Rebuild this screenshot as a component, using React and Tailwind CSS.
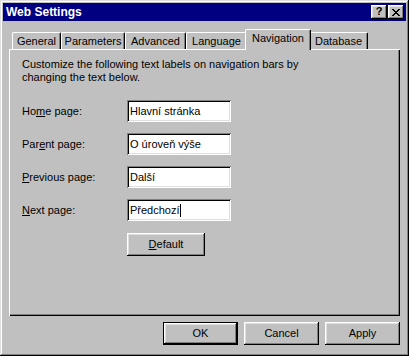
import React from "react";

const raised =
  "shadow-[inset_-1px_-1px_#000,inset_1px_1px_#fff,inset_-2px_-2px_#808080,inset_2px_2px_#dfdfdf]";
const sunken =
  "shadow-[inset_1px_1px_#808080,inset_-1px_-1px_#fff,inset_2px_2px_#000,inset_-2px_-2px_#dfdfdf]";

function Tab({ label, selected, w }) {
  if (selected) {
    return (
      <div className={`relative z-10 -mx-[2px] mb-[-1px] h-[21px] ${w} bg-[#c0c0c0] border-l border-t border-white border-r border-r-[#000] rounded-t-[2px] flex justify-center items-start shadow-[inset_-1px_0_#808080]`}>
        <span className="text-[11px] leading-[14px] pt-[1px]">{label}</span>
      </div>
    );
  }
  return (
    <div className={`h-[17px] ${w} bg-[#c0c0c0] border-l border-t border-white border-r border-r-[#000] rounded-t-[2px] flex justify-center items-start shadow-[inset_-1px_0_#808080]`}>
      <span className="text-[11px] leading-[14px] pt-[1px]">{label}</span>
    </div>
  );
}

function Field({ label, value, u, caret }) {
  const idx = label.indexOf(u);
  return (
    <div className="flex items-center h-[22px]">
      <div className="w-[105px] text-[11px]">
        {label.slice(0, idx)}
        <span className="underline underline-offset-[1px]">{u}</span>
        {label.slice(idx + 1)}
      </div>
      <div className={`w-[104px] h-[22px] bg-white ${sunken} pl-[3px] flex items-center text-[11px]`}>
        <span>{value}</span>
        {caret && <span className="inline-block w-[1px] h-[13px] bg-black" />}
      </div>
    </div>
  );
}

function Btn({ children, def, w = "w-[75px]" }) {
  if (def) {
    return (
      <div className={`${w} h-[23px] border border-black`}>
        <div className={`w-full h-full bg-[#c0c0c0] ${raised} flex items-center justify-center text-[11px]`}>
          {children}
        </div>
      </div>
    );
  }
  return (
    <div className={`${w} h-[23px] bg-[#c0c0c0] ${raised} flex items-center justify-center text-[11px]`}>
      {children}
    </div>
  );
}

export default function App() {
  return (
    <div
      className="w-[409px] h-[356px] bg-[#c0c0c0] p-[3px] text-black shadow-[inset_-1px_-1px_#000,inset_1px_1px_#dfdfdf,inset_-2px_-2px_#808080,inset_2px_2px_#fff]"
      style={{ fontFamily: '"Liberation Sans", Arial, sans-serif' }}
    >
      {/* title bar */}
      <div className="h-[18px] bg-[#000080] flex items-center pl-[3px] pr-[2px]">
        <span className="text-white font-bold text-[12px] leading-none flex-1">Web Settings</span>
        <div className={`w-[16px] h-[14px] bg-[#c0c0c0] ${raised} flex items-center justify-center text-[11px] font-bold leading-none pb-[1px]`}>?</div>
        <div className={`ml-[1px] w-[16px] h-[14px] bg-[#c0c0c0] ${raised} flex items-center justify-center`}>
          <svg width="8" height="7" viewBox="0 0 8 7" shapeRendering="crispEdges">
            <path d="M0 0h2v1h-2zM6 0h2v1h-2zM1 1h2v1h-2zM5 1h2v1h-2zM2 2h4v1h-4zM3 3h2v1h-2zM2 4h4v1h-4zM1 5h2v1h-2zM5 5h2v1h-2zM0 6h2v1h-2zM6 6h2v1h-2z" fill="#000" />
          </svg>
        </div>
      </div>

      {/* body */}
      <div className="px-[6px] pt-[7px]">
        <div className="flex items-end pl-[3px] h-[21px]">
          <Tab label="General" w="w-[49px]" />
          <Tab label="Parameters" w="w-[64px]" />
          <Tab label="Advanced" w="w-[61px]" />
          <Tab label="Language" w="w-[61px]" />
          <Tab label="Navigation" w="w-[66px]" selected />
          <Tab label="Database" w="w-[59px]" />
        </div>
        <div className="h-[267px] bg-[#c0c0c0] border-l border-t border-white shadow-[inset_-1px_-1px_#000,inset_-2px_-2px_#808080] pl-[12px] pt-[8px]">
          <p className="text-[11px] leading-[13px] w-[285px]">
            Customize the following text labels on navigation bars by changing the text below.
          </p>
          <div className="mt-[16px] flex flex-col gap-[11px]">
            <Field label="Home page:" u="m" value="Hlavní stránka" />
            <Field label="Parent page:" u="e" value="O úroveň výše" />
            <Field label="Previous page:" u="P" value="Další" />
            <Field label="Next page:" u="N" value="Předchozí" caret />
          </div>
          <div className="mt-[12px] ml-[105px]">
            <Btn w="w-[78px]">
              <span><span className="underline underline-offset-[1px]">D</span>efault</span>
            </Btn>
          </div>
        </div>
        <div className="flex justify-end gap-[6px] mt-[6px]">
          <Btn def>OK</Btn>
          <Btn>Cancel</Btn>
          <Btn>Apply</Btn>
        </div>
      </div>
    </div>
  );
}
